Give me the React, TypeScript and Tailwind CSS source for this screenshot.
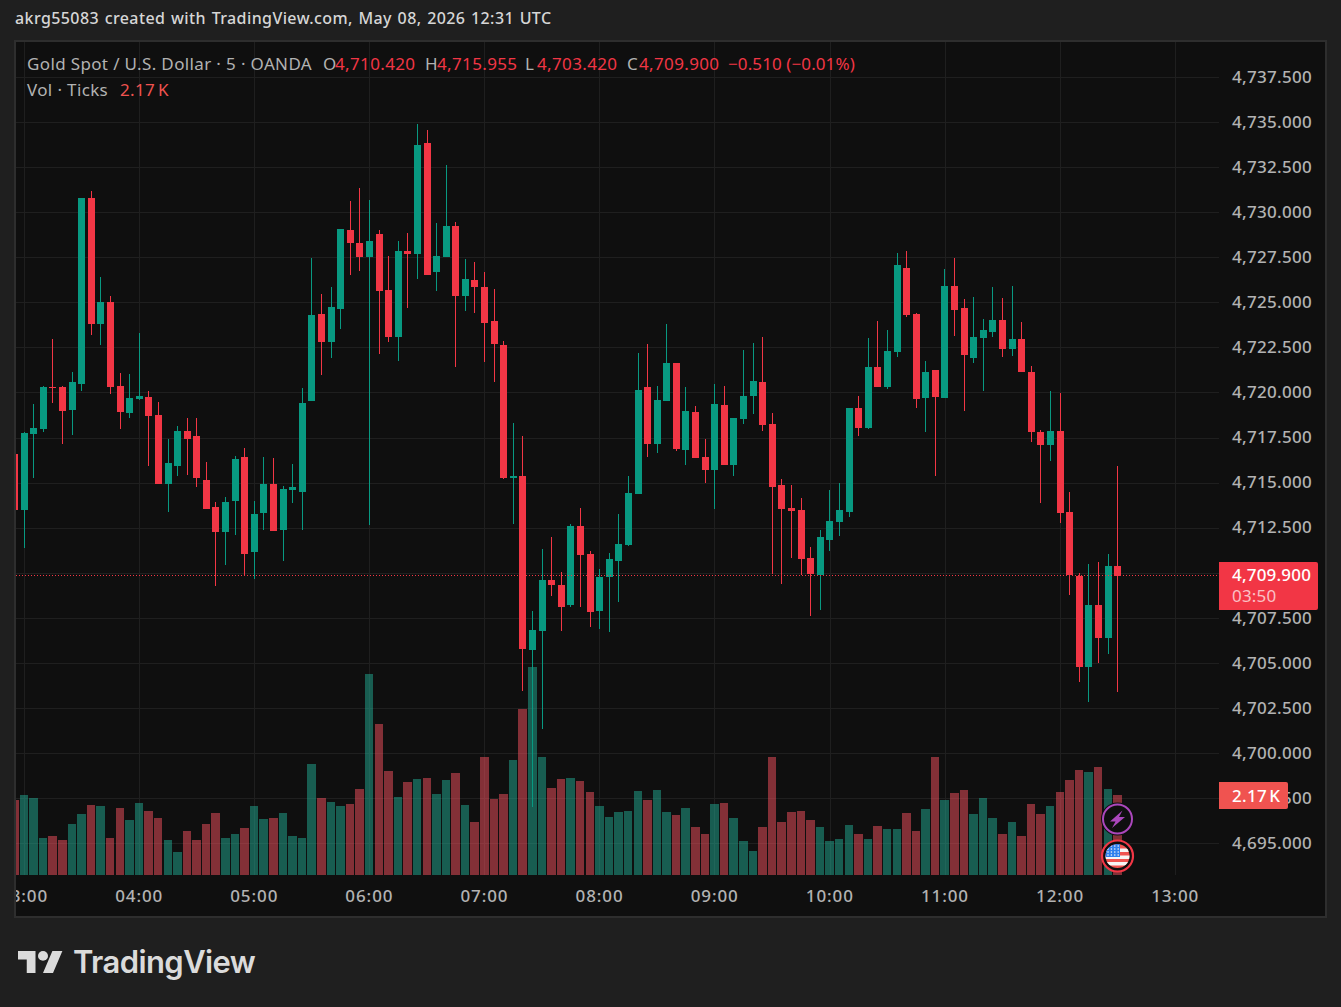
import { Fragment } from 'react';

type Bar = [string, number, number, number, number, number];

// colour, wick top, body top, body bottom, wick bottom, volume bar top (all in page pixels), first bar is index -1
const bars: Bar[] = [
  ['r', 454, 454, 510, 510, 800], ['g', 432, 433, 510, 548, 795], ['g', 404, 428, 434, 478, 798], ['g', 386, 387, 429, 432, 838],
  ['r', 339, 387, 388, 403, 836], ['r', 386, 387, 411, 444, 840], ['g', 372, 382, 410, 435, 824], ['g', 198, 198, 384, 391, 814],
  ['r', 191, 198, 324, 335, 805], ['g', 277, 302, 324, 345, 806], ['r', 296, 302, 387, 394, 838], ['r', 373, 386, 412, 429, 808],
  ['g', 374, 398, 413, 418, 820], ['g', 333, 396, 399, 400, 803], ['r', 391, 397, 416, 466, 811], ['r', 402, 415, 484, 484, 818],
  ['g', 439, 463, 484, 512, 840], ['g', 426, 431, 466, 476, 852], ['r', 418, 431, 439, 475, 831], ['r', 418, 436, 478, 487, 840],
  ['r', 462, 480, 509, 509, 824], ['r', 502, 507, 532, 586, 813], ['g', 497, 502, 532, 565, 838], ['g', 456, 459, 501, 535, 834],
  ['r', 448, 457, 554, 575, 828], ['g', 501, 514, 552, 579, 806], ['g', 457, 484, 513, 530, 819], ['r', 458, 484, 531, 531, 818],
  ['g', 486, 489, 530, 561, 813], ['g', 464, 487, 490, 503, 836], ['g', 388, 403, 492, 530, 838], ['g', 258, 315, 401, 401, 764],
  ['r', 294, 314, 342, 375, 798], ['g', 287, 307, 342, 358, 802], ['g', 229, 229, 309, 329, 806], ['r', 201, 230, 243, 275, 804],
  ['r', 188, 243, 257, 271, 789], ['g', 200, 241, 257, 525, 674], ['r', 230, 234, 291, 354, 724], ['r', 256, 290, 337, 342, 771],
  ['g', 241, 251, 337, 361, 797], ['r', 233, 251, 254, 308, 782], ['g', 124, 145, 254, 279, 779], ['r', 130, 143, 275, 275, 778],
  ['g', 223, 256, 272, 291, 794], ['g', 165, 226, 257, 257, 780], ['r', 222, 226, 296, 367, 773], ['g', 259, 279, 296, 311, 805],
  ['r', 262, 280, 287, 313, 822], ['r', 272, 287, 323, 362, 757], ['r', 289, 321, 344, 382, 799], ['r', 341, 345, 478, 479, 794],
  ['g', 423, 476, 478, 524, 760], ['r', 436, 476, 649, 691, 709], ['g', 611, 630, 650, 807, 667], ['g', 549, 580, 631, 729, 757],
  ['r', 537, 580, 585, 596, 788], ['r', 572, 585, 607, 631, 779], ['g', 524, 526, 605, 607, 778], ['r', 508, 526, 555, 607, 781],
  ['r', 551, 554, 612, 627, 792], ['g', 569, 577, 611, 629, 806], ['g', 553, 559, 577, 632, 817], ['g', 514, 544, 561, 602, 812],
  ['g', 476, 493, 545, 546, 811], ['g', 353, 390, 494, 494, 791], ['r', 344, 387, 444, 457, 800], ['g', 386, 400, 444, 453, 790],
  ['g', 324, 363, 401, 401, 812], ['r', 363, 363, 449, 451, 815], ['g', 387, 411, 450, 465, 808], ['r', 406, 412, 458, 458, 827],
  ['r', 439, 457, 470, 483, 834], ['g', 384, 404, 470, 509, 804], ['r', 386, 405, 465, 465, 803], ['g', 418, 418, 465, 476, 818],
  ['g', 350, 396, 419, 424, 841], ['g', 343, 381, 396, 414, 851], ['r', 337, 382, 425, 431, 827], ['r', 413, 424, 487, 574, 757],
  ['r', 479, 485, 509, 584, 822], ['r', 485, 508, 511, 558, 812], ['r', 498, 510, 559, 575, 811], ['r', 547, 558, 574, 616, 820],
  ['g', 530, 537, 575, 610, 827], ['g', 490, 521, 540, 551, 841], ['g', 483, 510, 522, 536, 839], ['g', 408, 408, 512, 517, 825],
  ['r', 396, 408, 428, 436, 834], ['g', 338, 367, 428, 429, 839], ['r', 321, 367, 387, 387, 826], ['g', 330, 351, 387, 389, 829],
  ['g', 253, 265, 352, 357, 829], ['r', 251, 268, 315, 317, 813], ['r', 313, 314, 399, 408, 831], ['g', 361, 372, 398, 432, 809],
  ['r', 370, 370, 397, 476, 757], ['g', 269, 286, 398, 398, 800], ['r', 258, 286, 310, 336, 793], ['r', 299, 308, 355, 411, 790],
  ['g', 297, 337, 358, 363, 814], ['g', 319, 330, 338, 391, 798], ['g', 287, 320, 332, 337, 818], ['r', 298, 320, 349, 357, 834],
  ['g', 286, 339, 349, 356, 822], ['r', 322, 339, 372, 372, 836], ['r', 366, 372, 432, 442, 804], ['r', 430, 432, 445, 503, 814],
  ['g', 391, 431, 445, 461, 806], ['r', 393, 431, 513, 523, 792], ['r', 492, 512, 575, 595, 780], ['r', 573, 576, 667, 682, 770],
  ['g', 564, 605, 667, 702, 772], ['r', 562, 605, 638, 663, 767], ['g', 554, 566, 638, 654, 789], ['r', 466, 566, 576, 692, 795],
];

const prices = [
  '4,737.500', '4,735.000', '4,732.500', '4,730.000', '4,727.500', '4,725.000', '4,722.500', '4,720.000', '4,717.500',
  '4,715.000', '4,712.500', '', '4,707.500', '4,705.000', '4,702.500', '4,700.000', '4,697.500', '4,695.000',
];
const times = ['03:00', '04:00', '05:00', '06:00', '07:00', '08:00', '09:00', '10:00', '11:00', '12:00', '13:00'];
const gridX = [24, 139, 254, 369, 484, 599, 714, 830, 945, 1060, 1175];

function Chart() {
  return (
    <svg viewBox="16 42 1203 833" shapeRendering="crispEdges" className="block h-[833px] w-[1203px]">
      {gridX.map((x) => (
        <rect key={x} x={x} y={42} width={1} height={833} fill="#1f1f1f" />
      ))}
      {prices.map((p, i) => (
        <rect key={i} x={16} y={Math.round(77 + 45.07 * i)} width={1203} height={1} fill="#1f1f1f" />
      ))}
      {bars.map((b, n) => {
        const c = 24.15 + 9.592 * (n - 1);
        const l = Math.round(c - 4.5);
        const r = Math.round(c + 4);
        return <rect key={n} x={l} y={b[5]} width={r - l} height={875 - b[5]} fill={b[0] === 'g' ? '#22ab94' : '#f7525f'} opacity={0.5} />;
      })}
      {bars.map((b, n) => {
        const left = Math.round(24.15 + 9.592 * (n - 1) - 3.5);
        const fill = b[0] === 'g' ? '#089981' : '#f23645';
        return (
          <Fragment key={n}>
            <rect x={left + 3} y={b[1]} width={1} height={b[4] - b[1]} fill={fill} />
            <rect x={left} y={b[2]} width={7} height={b[3] - b[2]} fill={fill} />
          </Fragment>
        );
      })}
      <line x1={16} y1={575.5} x2={1219} y2={575.5} stroke="#f23645" strokeWidth={1} strokeDasharray="1 2" />
      <g shapeRendering="auto">
        <circle cx={1117.5} cy={819} r={15} fill="#0f0f0f" stroke="#0f0f0f" strokeWidth={3} />
        <circle cx={1117.5} cy={819} r={14.5} fill="#0f0f0f" stroke="#ab47bc" strokeWidth={2} />
        <path d="M1122.5 810.5 L1110 821.5 L1115.5 821.5 L1112 828 L1125 817 L1119 817 Z" fill="#ab47bc" />
        <circle cx={1117.5} cy={856} r={15.5} fill="#0f0f0f" stroke="#f23645" strokeWidth={2.2} />
        <clipPath id="flag">
          <circle cx={1117.5} cy={856} r={12} />
        </clipPath>
        <g clipPath="url(#flag)">
          <rect x={1105} y={844} width={26} height={25} fill="#f05350" />
          <rect x={1105} y={848.5} width={26} height={3.5} fill="#f5f5f5" />
          <rect x={1105} y={855.5} width={26} height={3.5} fill="#f5f5f5" />
          <rect x={1105} y={862} width={26} height={3.5} fill="#f5f5f5" />
          <rect x={1105} y={844} width={15} height={13} fill="#2f80ed" />
          {[0, 1, 2, 3].map((row) =>
            [0, 1, 2, 3].map((col) => (
              <circle key={`${row}-${col}`} cx={1108 + col * 3.4} cy={846 + row * 3} r={0.8} fill="#f5f5f5" />
            )),
          )}
        </g>
      </g>
    </svg>
  );
}

export default function App() {
  return (
    <div className="h-[1007px] w-[1341px] overflow-hidden bg-[#1f1f1f] font-['Noto_Sans',sans-serif]">
      <div className="flex h-[40px] items-center pb-[5px] pl-[15px] text-[16px] font-medium tracking-[0.4px] [word-spacing:1.1px] text-[#d6d6d6]">
        akrg55083 created with TradingView.com, May 08, 2026 12:31 UTC
      </div>

      <div className="relative ml-[14px] flex h-[878px] w-[1313px] border-2 border-[#2e2e2e] bg-[#0f0f0f]">
        <div className="w-[1203px]">
          <Chart />
          <div className="h-[41px] overflow-hidden">
            <div className="ml-[-49.5px] flex h-full w-[1400px] items-center">
              {times.map((t) => (
                <div key={t} className="w-[115.12px] text-center text-[17px] font-medium tracking-[0.9px] text-[#b2b2b2]">
                  {t}
                </div>
              ))}
            </div>
          </div>
        </div>

        <div className="flex-1 pt-[12px] pl-[13px]">
          {prices.map((p, i) => (
            <div key={i} className="flex h-[45.07px] items-center text-[17px] font-medium tracking-[0.3px] text-[#b2b2b2]">
              {p}
            </div>
          ))}
        </div>

        {/* legend sits over the plot */}
        <div className="absolute top-[9px] left-[11px] text-[17px] leading-[26px] tracking-[0.36px] whitespace-nowrap text-[#b2b2b2]">
          <div className="flex">
            <span className="w-[285px]">Gold Spot / U.S. Dollar · 5 · OANDA</span>
            <span className="ml-[11px] w-[12px]">O</span>
            <span className="w-[80px] text-[#f23645]">4,710.420</span>
            <span className="ml-[10px] w-[12px]">H</span>
            <span className="w-[80px] text-[#f23645]">4,715.955</span>
            <span className="ml-[8px] w-[12px]">L</span>
            <span className="w-[80px] text-[#f23645]">4,703.420</span>
            <span className="ml-[10px] w-[12px]">C</span>
            <span className="w-[80px] text-[#f23645]">4,709.900</span>
            <span className="ml-[9px] tracking-[0.1px] text-[#f23645]">−0.510 (−0.01%)</span>
          </div>
          <div className="flex">
            <span className="w-[82px]">Vol · Ticks</span>
            <span className="ml-[11px] [word-spacing:-2px] text-[#f05350]">2.17 K</span>
          </div>
        </div>

        {/* last price and last volume tags */}
        <div className="absolute top-[520px] left-[1203px] flex h-[48px] w-[99px] flex-col justify-center rounded-r-[2px] bg-[#f23645] pb-[2px] pl-[13px] text-[17px] leading-[21px] tracking-[0.2px]">
          <span className="font-medium text-white">4,709.900</span>
          <span className="text-white/70">03:50</span>
        </div>
        <div className="absolute top-[740px] left-[1203px] flex h-[27px] w-[69px] items-center rounded-r-[2px] bg-[#f05350] pl-[13px] text-[17px] font-medium tracking-[0.3px] [word-spacing:-2.5px] text-white">
          2.17 K
        </div>
      </div>

      <div className="flex h-[89px] items-center pb-[2px] pl-[18px]">
        <svg viewBox="0 4 36 18" className="h-[22px] w-[45px]" preserveAspectRatio="none" fill="#dbdbdb">
          <path d="M14 22H7V11H0V4h14v18zM28 22h-8l7.5-18h8L28 22z" />
          <circle cx="20" cy="8" r="4" />
        </svg>
        <span className="ml-[10px] font-['Inter',sans-serif] text-[31px] leading-none font-semibold tracking-[-0.6px] text-[#dbdbdb]">TradingView</span>
      </div>
    </div>
  );
}
